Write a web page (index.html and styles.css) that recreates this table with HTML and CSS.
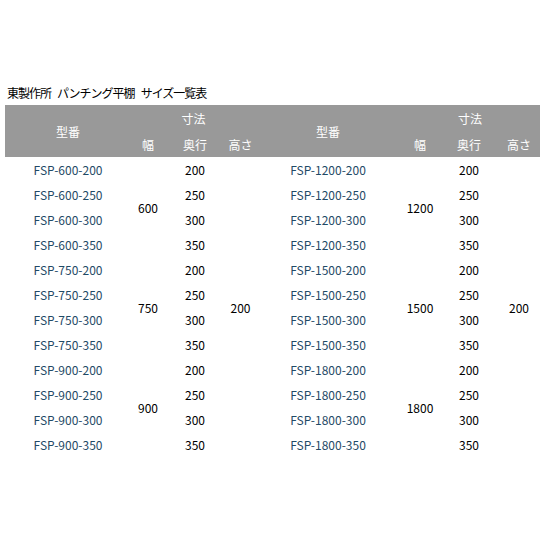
FILE: index.html
```html
<!DOCTYPE html>
<html lang="ja">
<head>
<meta charset="utf-8">
<link rel="stylesheet" href="styles.css">
</head>
<body>
<div class="page">
  <h1 class="title">東製作所<span class="gap"></span>パンチング平棚<span class="gap"></span>サイズ一覧表</h1>
  <table class="sizes">
    <colgroup>
      <col class="c-a"><col class="c-b"><col class="c-c"><col class="c-d">
      <col class="c-e"><col class="c-f"><col class="c-g"><col class="c-h">
    </colgroup>
    <thead>
      <tr>
        <th rowspan="2">型番</th>
        <th colspan="3">寸法</th>
        <th rowspan="2">型番</th>
        <th colspan="3">寸法</th>
      </tr>
      <tr>
        <th>幅</th><th>奥行</th><th>高さ</th>
        <th>幅</th><th>奥行</th><th>高さ</th>
      </tr>
    </thead>
    <tbody>
      <tr><td class="model">FSP-600-200</td><td rowspan="4">600</td><td>200</td><td rowspan="12">200</td><td class="model">FSP-1200-200</td><td rowspan="4">1200</td><td>200</td><td rowspan="12">200</td></tr>
      <tr><td class="model">FSP-600-250</td><td>250</td><td class="model">FSP-1200-250</td><td>250</td></tr>
      <tr><td class="model">FSP-600-300</td><td>300</td><td class="model">FSP-1200-300</td><td>300</td></tr>
      <tr><td class="model">FSP-600-350</td><td>350</td><td class="model">FSP-1200-350</td><td>350</td></tr>
      <tr><td class="model">FSP-750-200</td><td rowspan="4">750</td><td>200</td><td class="model">FSP-1500-200</td><td rowspan="4">1500</td><td>200</td></tr>
      <tr><td class="model">FSP-750-250</td><td>250</td><td class="model">FSP-1500-250</td><td>250</td></tr>
      <tr><td class="model">FSP-750-300</td><td>300</td><td class="model">FSP-1500-300</td><td>300</td></tr>
      <tr><td class="model">FSP-750-350</td><td>350</td><td class="model">FSP-1500-350</td><td>350</td></tr>
      <tr><td class="model">FSP-900-200</td><td rowspan="4">900</td><td>200</td><td class="model">FSP-1800-200</td><td rowspan="4">1800</td><td>200</td></tr>
      <tr><td class="model">FSP-900-250</td><td>250</td><td class="model">FSP-1800-250</td><td>250</td></tr>
      <tr><td class="model">FSP-900-300</td><td>300</td><td class="model">FSP-1800-300</td><td>300</td></tr>
      <tr><td class="model">FSP-900-350</td><td>350</td><td class="model">FSP-1800-350</td><td>350</td></tr>
    </tbody>
  </table>
</div>
</body>
</html>
```

FILE: styles.css
```css
html, body {
  margin: 0;
  padding: 0;
  background: #ffffff;
}
body {
  font-family: "Noto Sans CJK JP", "Liberation Sans", sans-serif;
  font-size: 12px;
  color: #000000;
}
.page {
  padding: 84px 0 0 5px;
}
.title {
  margin: 0 0 4px 2px;
  font-size: 12px;
  font-weight: normal;
  line-height: 17px;
  letter-spacing: -1px;
}
.gap {
  display: inline-block;
  width: 6px;
}
.sizes {
  border-collapse: collapse;
  table-layout: fixed;
  width: 535px;
}
.c-a { width: 126px; }
.c-b { width: 34px; }
.c-c { width: 60px; }
.c-d { width: 31px; }
.c-e { width: 144px; }
.c-f { width: 40px; }
.c-g { width: 58px; }
.c-h { width: 42px; }
.sizes th {
  background: #999999;
  color: #ffffff;
  font-weight: normal;
  height: 26px;
  padding: 0;
  text-align: center;
  vertical-align: middle;
}
.sizes td {
  height: 25px;
  padding: 0;
  text-align: center;
  vertical-align: middle;
}
.sizes td.model {
  color: #1f4a66;
}
```
